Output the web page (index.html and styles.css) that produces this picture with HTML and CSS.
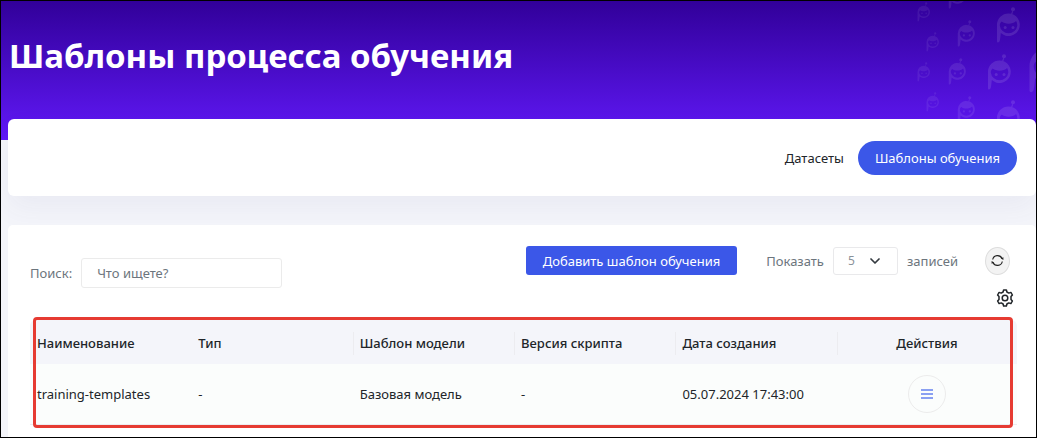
FILE: index.html
```html
<!DOCTYPE html>
<html lang="ru">
<head>
<meta charset="utf-8">
<meta name="viewport" content="width=device-width, initial-scale=1">
<title>Шаблоны процесса обучения</title>
<link rel="stylesheet" href="styles.css">
</head>
<body>
<div class="page">
  <header class="hero">
    <h1 class="hero-title">Шаблоны процесса обучения</h1>
    <svg class="hero-pattern" width="120" height="139" viewBox="0 0 120 139" aria-hidden="true">
      <defs>
        <symbol id="mascot" viewBox="0 0 24 36">
          <circle cx="17" cy="2.2" r="2"/>
          <path d="M16.200 3.900l1 .3-1 3.300-1.200-.3Z"/>
          <path fill-rule="evenodd" d="M12.500 6.500a11.300 11.300 0 1 1-7.700 19.600C4.500 29 4.300 32 3.700 34c-.5 1.700-2.700 2-2.700.2V18A11.400 11.400 0 0 1 12.500 6.500ZM3.800 18.500a8.800 8.800 0 0 0 17.500 0c0-1.700-.4-3.200-1.200-4.500-1.800 1.800-4.600 2.800-7.600 2.800-2.700 0-5-.9-6.700-2.200-1.300 1-2 2.300-2 3.900Z"/>
          <circle cx="9.200" cy="20.500" r="1.500"/>
          <circle cx="17" cy="20.500" r="1.500"/>
        </symbol>
      </defs>
      <g fill="#fff">
        <g opacity=".07">
          <use href="#mascot" x="1" y="1" width="13" height="20"/>
          <use href="#mascot" x="10" y="31" width="13" height="20"/>
          <use href="#mascot" x="1" y="61" width="13" height="20"/>
          <use href="#mascot" x="10" y="91" width="13" height="20"/>
        </g>
        <g opacity=".09">
          <use href="#mascot" x="32" y="-19" width="18" height="27"/>
          <use href="#mascot" x="41" y="19" width="18" height="27"/>
          <use href="#mascot" x="32" y="57" width="18" height="27"/>
          <use href="#mascot" x="41" y="95" width="18" height="27"/>
        </g>
        <g opacity=".11">
          <use href="#mascot" x="80" y="6" width="24" height="36"/>
          <use href="#mascot" x="71" y="53" width="24" height="36"/>
          <use href="#mascot" x="80" y="99" width="24" height="36"/>
          <use href="#mascot" x="112" y="38" width="36" height="54"/>
        </g>
      </g>
    </svg>
  </header>

  <nav class="tabs">
    <a class="tab" href="#datasets">Датасеты</a>
    <a class="tab tab-active" href="#templates" aria-current="page">Шаблоны обучения</a>
  </nav>

  <main class="panel">
    <div class="toolbar">
      <div class="search">
        <label for="search">Поиск:</label>
        <input class="search-input" id="search" type="text" placeholder="Что ищете?">
      </div>
      <div class="actions">
        <button class="add-button" type="button">Добавить шаблон обучения</button>
        <div class="page-size">
          <label for="size">Показать</label>
          <span class="select-wrap">
            <select class="size-select" id="size"><option>5</option><option>10</option><option>25</option></select>
            <svg class="chevron" width="10" height="6" viewBox="0 0 10 6" aria-hidden="true"><path d="M1 1l4 4 4-4" fill="none" stroke="#343a40" stroke-width="1.700" stroke-linecap="round" stroke-linejoin="round"/></svg>
          </span>
          <span>записей</span>
        </div>
        <button class="refresh" type="button" aria-label="Обновить">
          <svg width="13" height="13" viewBox="0 0 13 13" fill="none" stroke="#222" stroke-width="1.200" aria-hidden="true"><path d="M1.700 5.500A4.900 4.900 0 0 1 11 4.500M11.300 7.500A4.900 4.900 0 0 1 2 8.500"/><path d="M9.800 4.600 12.400 6V3.200ZM3.200 8.400.6 7v2.800Z" fill="#222" stroke="none"/></svg>
        </button>
      </div>
    </div>
    <div class="settings-row">
      <button class="settings" type="button" aria-label="Настройки">
        <svg width="18" height="18" viewBox="0 0 18 18" fill="none" stroke="#212529" stroke-width="1.500" stroke-linejoin="round" aria-hidden="true"><path d="M7.600 1h2.800l.5 2 1.900 1.100 2.100-.7 1.500 2.600L15 7.600v2.800l1.400 1.600-1.500 2.600-2.100-.7-1.900 1.100-.5 2H7.600l-.5-2-1.900-1.100-2.100.7L1.600 12 3 10.400V7.600L1.600 6l1.500-2.600 2.100.7L7.100 3Z"/><circle cx="9" cy="9" r="2.800"/></svg>
      </button>
    </div>
    <div class="table-frame">
      <table class="table">
        <thead>
          <tr><th>Наименование</th><th>Тип</th><th>Шаблон модели</th><th>Версия скрипта</th><th>Дата создания</th><th>Действия</th></tr>
        </thead>
        <tbody>
          <tr>
            <td>training-templates</td><td>-</td><td>Базовая модель</td><td>-</td><td>05.07.2024 17:43:00</td>
            <td><button class="row-menu" type="button" aria-label="Действия"><svg width="12" height="10" viewBox="0 0 12 10" aria-hidden="true"><path d="M0 1h12M0 5h12M0 9h12" stroke="#6681ee" stroke-width="1.300"/></svg></button></td>
          </tr>
        </tbody>
      </table>
    </div>
  </main>
</div>
</body>
</html>
```
FILE: styles.css
```css
* { box-sizing: border-box; }

body {
  margin: 0;
  background: #f4f5fa;
  color: #212529;
  font: 13px/20px "Noto Sans", "Open Sans", sans-serif;
}

button, input, select { font: inherit; }
button { cursor: pointer; }

.page {
  display: flex;
  flex-direction: column;
  min-height: 100vh;
  border: 1px solid #000;
  overflow: hidden;
}

.hero {
  position: relative;
  height: 139px;
  padding: 30px 8px;
  background: linear-gradient(#310099, #6119f8);
}

.hero-title {
  margin: 0;
  color: #fff;
  font-size: 33px;
  line-height: 50px;
  font-weight: 700;
}

.hero-pattern {
  position: absolute;
  top: 0;
  right: 0;
}

.tabs {
  position: relative;
  display: flex;
  justify-content: flex-end;
  align-items: center;
  gap: 14px;
  height: 77px;
  margin: -21px 0 0 7px;
  padding-right: 19px;
  border-radius: 6px;
  background: #fff;
  box-shadow: 0 12px 28px rgba(60, 60, 140, .06);
}

.tab {
  color: #212529;
  text-decoration: none;
}

.tab-active {
  padding: 7px 17px;
  border-radius: 17px;
  background: #3b57e8;
  color: #fff;
}

.panel {
  position: relative;
  flex: 1;
  margin: 29px 0 0 7px;
  padding: 21px 19px 9px 22px;
  border-radius: 5px 5px 0 0;
  background: #fff;
}

.toolbar {
  display: flex;
  justify-content: space-between;
  align-items: flex-start;
  color: #6c757d;
}

.search {
  display: flex;
  align-items: center;
  gap: 9px;
  padding-top: 12px;
}

.search-input {
  width: 201px;
  height: 30px;
  padding: 0 15px;
  border: 1px solid #ebebeb;
  border-radius: 3px;
  color: #495057;
}

.search-input::placeholder { color: #6c757d; opacity: 1; }

.actions {
  display: flex;
  align-items: center;
  padding-right: 7px;
}

.add-button {
  height: 29px;
  margin-right: 29px;
  padding: 0 17px;
  border: 0;
  border-radius: 3px;
  background: #3b57e8;
  color: #fff;
}

.page-size {
  display: flex;
  align-items: center;
  gap: 9px;
  margin-right: 27px;
}

.select-wrap {
  position: relative;
  display: flex;
}

.size-select {
  width: 65px;
  height: 28px;
  padding: 0 14px;
  border: 1px solid #e9e9eb;
  border-radius: 3px;
  background: #fff;
  color: #8a929a;
  font-size: 12px;
  appearance: none;
}

.chevron {
  position: absolute;
  top: 11px;
  right: 18px;
  pointer-events: none;
}

.refresh {
  display: flex;
  align-items: center;
  justify-content: center;
  width: 25px;
  height: 28px;
  padding: 0;
  border: 1px solid #ddd;
  border-radius: 50%;
  background: #f3f3f3;
}

.settings-row {
  display: flex;
  justify-content: flex-end;
  padding: 1px 3px 0 0;
}

.settings {
  display: flex;
  padding: 0;
  border: 0;
  background: none;
}

.table-frame {
  position: relative;
  margin-top: 13px;
}

.table-frame::after {
  content: "";
  position: absolute;
  inset: -3px 4px -3px 3px;
  border: 3px solid #e63b32;
  border-radius: 4px;
  pointer-events: none;
}

.table {
  width: 100%;
  border-collapse: separate;
  border-spacing: 0;
  table-layout: fixed;
}

.table th,
.table td {
  padding: 0 7px;
  text-align: left;
}

.table th {
  position: relative;
  width: 16.35%;
  height: 44px;
  padding-top: 2px;
  background: #f4f5fa;
  font-weight: 500;
}

.table th:first-child { border-radius: 6px 0 0; }
.table th:last-child { width: auto; border-radius: 0 6px 0 0; }

.table th:nth-child(n + 3)::before {
  content: "";
  position: absolute;
  top: 12px;
  bottom: 9px;
  left: 0;
  width: 1px;
  background: #ececf0;
}

.table td {
  height: 61px;
  border-bottom: 1px solid #ececf0;
  background: #fbfdfc;
}

.table th:last-child,
.table td:last-child { text-align: center; }

.row-menu {
  display: inline-flex;
  align-items: center;
  justify-content: center;
  width: 38px;
  height: 38px;
  padding: 0;
  border: 1px solid #ececec;
  border-radius: 50%;
  background: transparent;
  vertical-align: middle;
}
```
